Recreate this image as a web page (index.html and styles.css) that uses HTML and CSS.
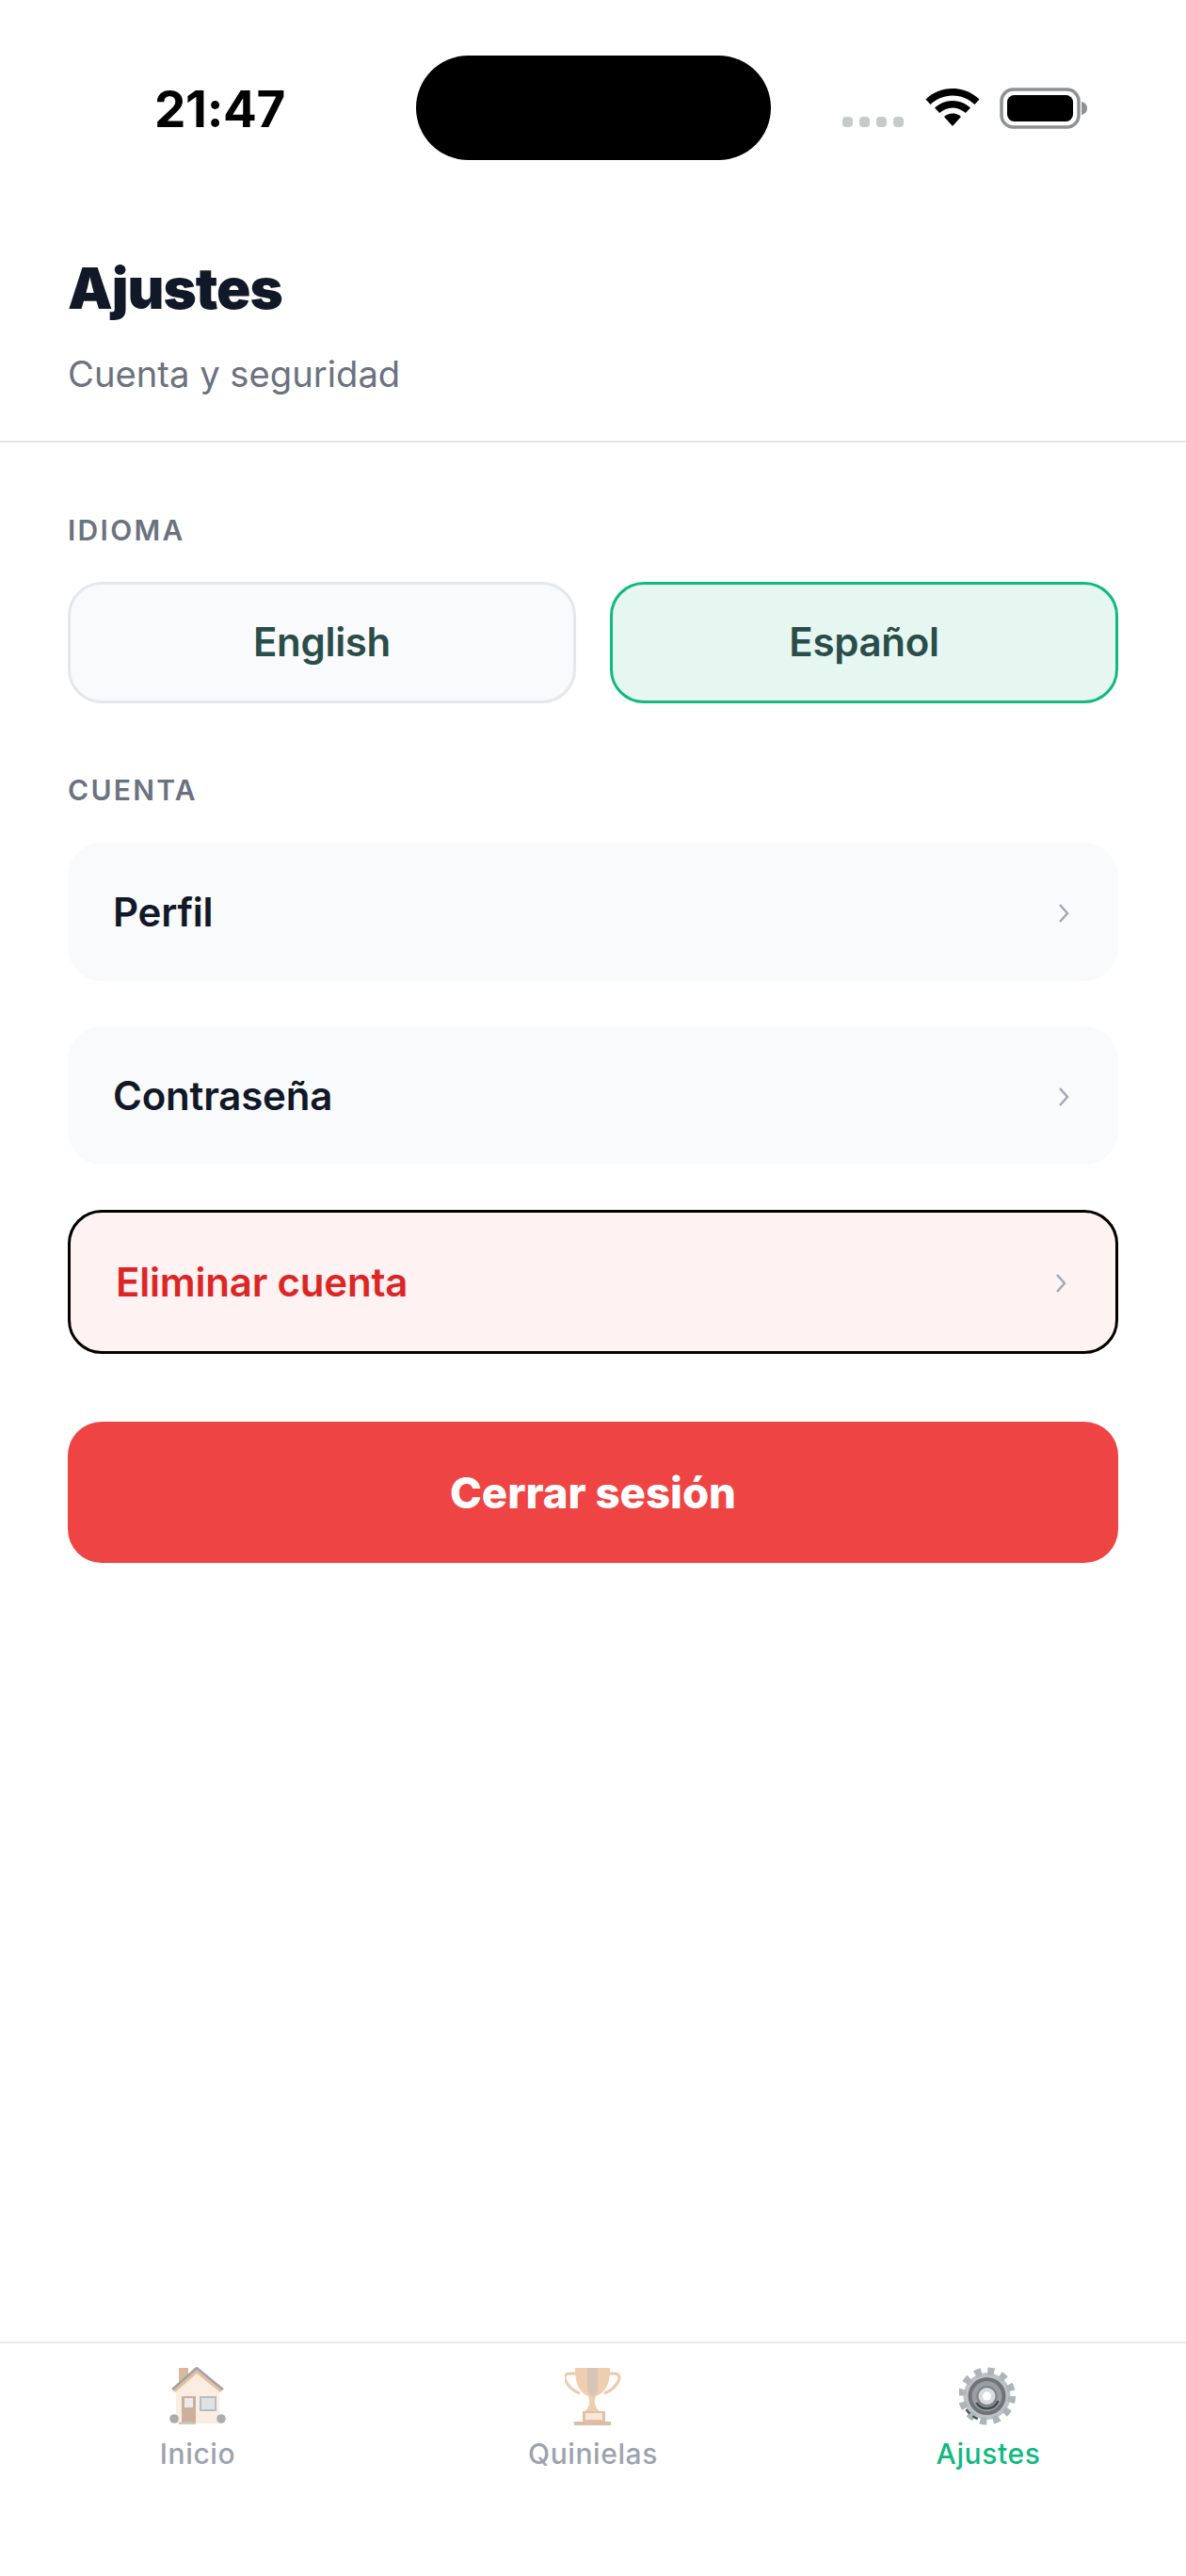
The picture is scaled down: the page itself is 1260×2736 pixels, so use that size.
FILE: index.html
```html
<!DOCTYPE html>
<html lang="es">
<head>
<meta charset="utf-8">
<title>Ajustes</title>
<link rel="stylesheet" href="styles.css">
</head>
<body>
<div class="screen">
  <div class="statusbar">
    <div class="time">21:47</div>
    <div class="island"></div>
    <div class="status-icons">
      <div class="signal"><i></i><i></i><i></i><i></i></div>
      <svg class="wifi" width="60" height="42" viewBox="0 0 60 42"><path d="M30 1C18.800 1 9 5.200 1.500 12.500L6.500 18C13 12 21 8.500 30 8.500S47 12 53.500 18L58.500 12.500C51 5.200 41.200 1 30 1Z"/><path d="M30 14C22.500 14 16 17 11 21.500L16.200 27C20 23.700 24.700 21.500 30 21.500S40 23.700 43.800 27L49 21.500C44 17 37.500 14 30 14Z"/><path d="M30 27.500C26.500 27.500 23.500 28.800 21 31L30 41L39 31C36.500 28.800 33.500 27.500 30 27.500Z"/></svg>
      <svg class="battery" width="94" height="44" viewBox="0 0 94 44"><rect x="2" y="2" width="82" height="40" rx="12.500" fill="none" stroke="#8e9194" stroke-width="3.500"/><rect x="8" y="8" width="70" height="28" rx="7.500" fill="#000"/><path d="M87 15C91 16 93 18.500 93 22S91 28 87 29Z" fill="#8e9194"/></svg>
    </div>
  </div>

  <header class="header">
    <h1 class="title">Ajustes</h1>
    <p class="subtitle">Cuenta y seguridad</p>
  </header>

  <main class="content">
    <h2 class="section-label">IDIOMA</h2>
    <div class="lang-row">
      <div class="lang">English</div>
      <div class="lang lang-active">Español</div>
    </div>

    <h2 class="section-label section-account">CUENTA</h2>
    <div class="list">
      <div class="row"><span>Perfil</span><svg class="chev" width="12" height="22" viewBox="0 0 12 22"><path d="M2 2L10 11L2 20"/></svg></div>
      <div class="row"><span>Contraseña</span><svg class="chev" width="12" height="22" viewBox="0 0 12 22"><path d="M2 2L10 11L2 20"/></svg></div>
      <div class="row row-danger"><span>Eliminar cuenta</span><svg class="chev" width="12" height="22" viewBox="0 0 12 22"><path d="M2 2L10 11L2 20"/></svg></div>
    </div>
    <div class="logout">Cerrar sesión</div>
  </main>

  <nav class="tabbar">
    <div class="tab">
      <svg class="tab-icon dim" width="60" height="62" viewBox="0 0 60 62">
        <rect x="10" y="1" width="10" height="18" fill="#c07f4a"/>
        <path d="M7 24L29 4L53 24V60H7Z" fill="#fbe0cc"/>
        <path d="M3 24L29 1L57 24L54 27L29 7L6 27Z" fill="#d98a45"/>
        <path d="M3 24L29 1L57 24" fill="none" stroke="#4c5b70" stroke-width="2.500"/>
        <rect x="13" y="31" width="15" height="29" fill="#a5704c"/>
        <rect x="16" y="33" width="9" height="10" fill="#d5dcdf"/>
        <rect x="32" y="31" width="18" height="16" fill="#7c8790"/>
        <rect x="34" y="33" width="14" height="12" fill="#c5ccd0"/>
        <circle cx="5" cy="55" r="4.800" fill="#656a6e"/>
        <circle cx="55" cy="55" r="4.800" fill="#656a6e"/>
        <rect x="10" y="58.500" width="18" height="2.500" fill="#a89888"/>
      </svg>
      <span class="tab-label">Inicio</span>
    </div>
    <div class="tab">
      <svg class="tab-icon dim" width="60" height="62" viewBox="1 0 60 62">
        <path d="M13 7H6C1 7 0 11 2 15C5 21 9 25 17 28M47 7H54C59 7 60 11 58 15C55 21 51 25 43 28" fill="none" stroke="#e0a06a" stroke-width="3"/>
        <path d="M12 1H49C49 14 47 26 34 31C32 37 32 42 38 47H22C28 42 28 37 26 31C14 26 12 14 12 1Z" fill="#e2a671"/>
        <path d="M25 1H36V24L33 31H28L25 24Z" fill="#b99877"/>
        <rect x="20" y="47" width="24" height="11" fill="#c98e5d"/>
        <rect x="23" y="49" width="18" height="7" fill="#f4d6ba"/>
        <rect x="11" y="58" width="39" height="4" fill="#bb8a60"/>
      </svg>
      <span class="tab-label">Quinielas</span>
    </div>
    <div class="tab tab-active">
      <svg class="tab-icon" width="62" height="62" viewBox="1.500 0 62 62">
        <circle cx="31" cy="31" r="25" fill="#bcc2c5"/>
        <circle cx="31" cy="31" r="26.500" fill="none" stroke="#aeb5b8" stroke-width="8" stroke-dasharray="7 6.870"/>
        <path d="M9 45A26 26 0 0 0 24 56" fill="none" stroke="#4c5a5c" stroke-width="2.500" stroke-dasharray="6 4"/>
        <circle cx="31" cy="31" r="20" fill="#6f7478"/>
        <circle cx="31" cy="31" r="16" fill="#9a9ea2"/>
        <path d="M20 38A13 13 0 0 0 43 36" fill="none" stroke="#3f4c4e" stroke-width="2.500"/>
        <circle cx="31" cy="31" r="11" fill="#7d8285"/>
        <circle cx="31" cy="31" r="9" fill="#d8dbdd"/>
        <circle cx="31" cy="31" r="4.500" fill="#fff"/>
      </svg>
      <span class="tab-label">Ajustes</span>
    </div>
  </nav>
</div>
</body>
</html>
```

FILE: styles.css
```css
* { box-sizing: border-box; }
html, body { margin: 0; padding: 0; background: #fff; }
body { font-family: Inter, "Liberation Sans", sans-serif; }
.screen { width: 1260px; height: 2736px; display: flex; flex-direction: column; background: #fff; }

.statusbar { height: 222px; padding-top: 59px; position: relative; display: flex; justify-content: center; flex-shrink: 0; }
.time { position: absolute; left: 164px; top: 86px; font-size: 53px; line-height: 60px; font-weight: 700; color: #000; letter-spacing: -.3px; }
.island { width: 377px; height: 111px; border-radius: 56px; background: #000; }
.status-icons { position: absolute; left: 895px; top: 92px; display: flex; align-items: flex-start; }
.signal { display: flex; gap: 7px; margin-top: 32px; width: 87px; }
.signal i { width: 11px; height: 11px; border-radius: 4px; background: #c6cbc9; }
.wifi { margin-top: 1px; }
.battery { margin-left: 20px; margin-top: 1px; }

.header { height: 248px; padding: 48px 72px 0; border-bottom: 2px solid #e5e7eb; flex-shrink: 0; }
.title { margin: 0; font-size: 60px; line-height: 72px; font-weight: 900; color: #111827; letter-spacing: -1px; }
.subtitle { margin: 32px 0 0; font-size: 38.2px; line-height: 46px; font-weight: 400; color: #6b7280; }

.content { flex: 1; padding: 0 72px; display: flex; flex-direction: column; }
.section-label { margin: 0; font-size: 30px; line-height: 36px; font-weight: 600; color: #6b7280; letter-spacing: 2.300px; }
.content > .section-label:first-child { margin-top: 75px; }
.section-account { margin-top: 74px; }
.lang-row { display: flex; gap: 36px; margin-top: 37px; }
.lang { flex: 1; height: 129px; border: 3px solid #e5e7eb; border-radius: 36px; background: #f9fafb; display: flex; align-items: center; justify-content: center; font-size: 42px; font-weight: 600; letter-spacing: -.3px; color: #2a4d49; padding-bottom: 2px; }
.lang-active { background: #e6f7f1; border-color: #10b981; }

.list { display: flex; flex-direction: column; gap: 48px; margin-top: 38px; }
.row { height: 147px; padding: 0 52px 0 48px; border-radius: 36px; background: #f9fafb; display: flex; align-items: center; justify-content: space-between; font-size: 42px; font-weight: 600; letter-spacing: -.2px; color: #111827; }
.row-danger { height: 153px; padding: 0 52px 0 48px; background: #fef2f2; border: 3px solid #000; color: #dc2626; }
.chev { fill: none; stroke: #a3a9b2; stroke-width: 2.500; margin-top: 3px; }
.logout { margin-top: 72px; height: 150px; border-radius: 36px; background: #ef4444; color: #fff; font-size: 45.5px; font-weight: 800; display: flex; align-items: center; justify-content: center; }

.tabbar { height: 249px; border-top: 2px solid #e5e7eb; padding-top: 25px; display: flex; justify-content: space-around; flex-shrink: 0; }
.tab { width: 420px; display: flex; flex-direction: column; align-items: center; gap: 12px; }
.tab-icon { display: block; }
.dim { opacity: .55; }
.tab-label { font-size: 30px; line-height: 36px; font-weight: 500; color: #9ca3af; letter-spacing: .6px; }
.tab-active .tab-label { color: #10b981; }
```
